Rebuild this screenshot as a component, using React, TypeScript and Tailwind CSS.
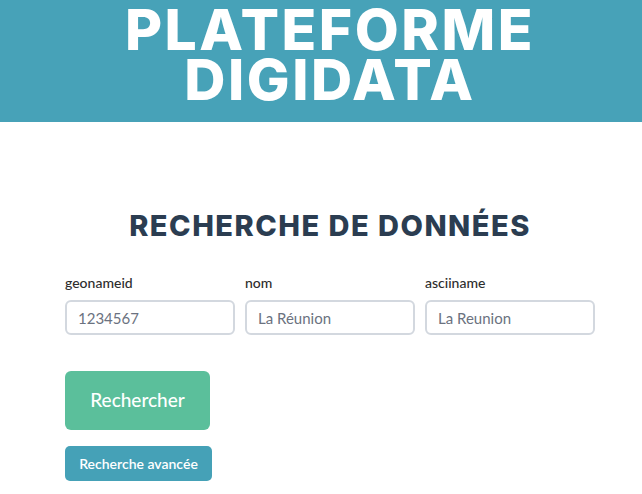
import React from 'react';

const fields = [
  { label: 'geonameid', placeholder: '1234567' },
  { label: 'nom', placeholder: 'La Réunion' },
  { label: 'asciiname', placeholder: 'La Reunion' },
];

export default function App() {
  return (
    <div className="min-h-[494px] bg-white font-['Lato',sans-serif]">
      {/* Header */}
      <header className="h-[122px] bg-[#47a2b8]">
        <div className="ml-[65px] w-[530px] pt-[5px] text-center">
          <h1 className="font-['Inter',sans-serif] text-[57px] font-extrabold uppercase leading-[50px] tracking-[2.5px] text-white">
            Plateforme
            <br />
            Digidata
          </h1>
        </div>
      </header>

      {/* Search form */}
      <main className="ml-[65px] w-[530px] pt-[86px]">
        <h2 className="text-center font-['Inter',sans-serif] text-[29px] font-extrabold uppercase leading-[36px] tracking-[1.5px] text-[#2b3d51]">
          Recherche de données
        </h2>

        <div className="mt-[29px] grid grid-cols-3 gap-[10px]">
          {fields.map((f) => (
            <div key={f.label} className="flex flex-col">
              <label className="text-[14px] font-medium leading-[20px] text-[#2d2d2d]">{f.label}</label>
              <input
                placeholder={f.placeholder}
                className="mt-[7px] h-[35px] rounded-[6px] border-2 border-[#d3d8df] px-[11px] text-[15px] text-[#374151] placeholder:text-[#6b7280] outline-none"
              />
            </div>
          ))}
        </div>

        <button className="mt-[36px] block h-[59px] w-[145px] rounded-[6px] bg-[#5bbf9b] text-[19px] font-medium text-white">
          Rechercher
        </button>

        <button className="mt-[16px] block h-[35px] w-[147px] rounded-[5px] bg-[#45a1b7] text-[14px] font-semibold text-white">
          Recherche avancée
        </button>
      </main>
    </div>
  );
}
